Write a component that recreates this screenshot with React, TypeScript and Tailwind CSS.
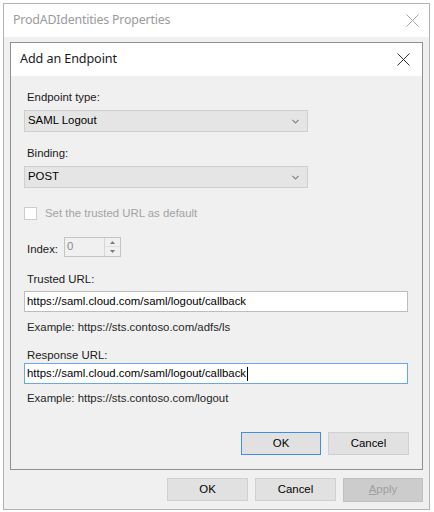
import React from 'react';

const uiFont = { fontFamily: '"Liberation Sans", Arial, sans-serif' };
const titleFont = { fontFamily: '"Noto Sans", "Open Sans", sans-serif' };

const CloseIcon = ({ color }: { color: string }) => (
    <svg width="13" height="13" viewBox="0 0 13 13" fill="none">
        <path d="M0.5 0.5 12.5 12.5 M12.5 0.5 0.5 12.5" stroke={color} strokeWidth="1" />
    </svg>
);

const Chevron = () => (
    <svg width="7" height="5" viewBox="0 0 7 5" fill="none">
        <path d="M0.5 1 3.5 4 6.5 1" stroke="#8a8a8a" strokeWidth="1.2" />
    </svg>
);

const Select = ({ value }: { value: string }) => (
    <div className="flex h-[22px] w-[284px] items-center justify-between border border-[#cfcfcf] bg-[#e5e5e5] pl-[3px] pr-[8px] text-[11.4px] text-black">
        <span>{value}</span>
        <Chevron />
    </div>
);

const TextBox = ({ value, focused }: { value: string; focused?: boolean }) => (
    <div
        className={
            focused
                ? 'flex h-[21px] w-[384px] items-center border border-[#6aa7e6] bg-white pl-[2px] text-[11.4px] text-black'
                : 'flex h-[21px] w-[384px] items-center border border-[#bdbdbd] bg-white pl-[2px] text-[11.4px] text-black'
        }
    >
        <span>{value}</span>
        {focused && <span className="ml-[1px] h-[14px] w-[1px] bg-black" />}
    </div>
);

const Button = ({ label, primary, disabled }: { label: string; primary?: boolean; disabled?: boolean }) => {
    if (disabled) {
        return (
            <div className="flex h-[24px] w-[80px] items-center justify-center border border-[#bfbfbf] bg-[#cccccc] text-[11.4px] text-[#a0a0a0]">
                <span>
                    <span className="underline">A</span>pply
                </span>
            </div>
        );
    }
    return (
        <div
            className={
                primary
                    ? 'flex h-[23px] w-[80px] items-center justify-center border border-[#3f8fde] bg-[#e1e1e1] text-[11.4px] text-black'
                    : 'flex h-[23px] w-[81px] items-center justify-center border border-[#d0d0d0] bg-[#e1e1e1] text-[11.4px] text-black'
            }
        >
            {label}
        </div>
    );
};

const SpinBox = () => (
    <div className="flex h-[20px] w-[57px] border border-[#c4c4c4] bg-[#f0f0f0]">
        <div className="flex-1 pl-[2px] pt-[1px] text-[11.4px] leading-[14px] text-[#8a8a8a]">0</div>
        <div className="flex w-[16px] flex-col border-l border-[#d6d6d6]">
            <div className="flex h-[9px] items-center justify-center border-b border-[#e0e0e0]">
                <svg width="5" height="3" viewBox="0 0 5 3">
                    <path d="M0 3 2.5 0 5 3Z" fill="#7a7a7a" />
                </svg>
            </div>
            <div className="flex flex-1 items-center justify-center">
                <svg width="5" height="3" viewBox="0 0 5 3">
                    <path d="M0 0 2.5 3 5 0Z" fill="#7a7a7a" />
                </svg>
            </div>
        </div>
    </div>
);

const Label = ({ children, className = '' }: { children: React.ReactNode; className?: string }) => (
    <div className={'h-[14px] text-[11.4px] leading-[14px] text-[#1a1a1a] ' + className}>{children}</div>
);

export default function App() {
    return (
        <div className="h-[512px] w-[434px] bg-white pl-[3px] pt-[3px]" style={uiFont}>
            <div className="flex h-[507px] w-[427px] flex-col border border-[#b3b3b3] bg-[#f0f0f0]">
                {/* outer window title */}
                <div className="flex h-[33px] items-center justify-between bg-white pl-[9px] pr-[10px]">
                    <span className="text-[12.4px] tracking-[-0.2px] text-[#9b9b9b]" style={titleFont}>
                        ProdADIdentities Properties
                    </span>
                    <CloseIcon color="#a8a8a8" />
                </div>

                <div className="flex flex-col pl-[6px] pr-[6px] pt-[5px]">
                    {/* inner dialog */}
                    <div className="flex h-[428px] w-[413px] flex-col border border-[#8f8f8f] bg-[#f0f0f0]">
                        <div className="flex h-[33px] items-center justify-between bg-white pl-[9px] pr-[12px]">
                            <span className="text-[12.6px] tracking-[-0.1px] text-[#1a1a1a]" style={titleFont}>
                                Add an Endpoint
                            </span>
                            <CloseIcon color="#333333" />
                        </div>

                        <div className="flex flex-col pl-[13px] pt-[14px]">
                            <Label className="pl-[3px]">Endpoint type:</Label>
                            <div className="mt-[6px]">
                                <Select value="SAML Logout" />
                            </div>

                            <Label className="mt-[14px] pl-[3px]">Binding:</Label>
                            <div className="mt-[6px]">
                                <Select value="POST" />
                            </div>

                            <div className="mt-[19px] flex h-[13px] items-center gap-[8px]">
                                <div className="h-[13px] w-[13px] border border-[#cdcdcd] bg-white" />
                                <span className="text-[11.4px] text-[#a3a3a3]">Set the trusted URL as default</span>
                            </div>

                            <div className="mt-[17px] flex h-[20px] items-center gap-[6px]">
                                <span className="pl-[3px] pt-[5px] text-[11.4px] text-[#1a1a1a]">Index:</span>
                                <SpinBox />
                            </div>

                            <Label className="mt-[15px] pl-[3px]">Trusted URL:</Label>
                            <div className="mt-[5px]">
                                <TextBox value="https://saml.cloud.com/saml/logout/callback" />
                            </div>
                            <Label className="mt-[8px] pl-[3px] text-[#262626]">Example: https://sts.contoso.com/adfs/ls</Label>

                            <Label className="mt-[14px] pl-[3px]">Response URL:</Label>
                            <div className="mt-[1px]">
                                <TextBox value="https://saml.cloud.com/saml/logout/callback" focused />
                            </div>
                            <Label className="mt-[7px] pl-[3px] text-[#262626]">Example: https://sts.contoso.com/logout</Label>

                            <div className="mt-[27px] flex justify-end gap-[7px] pr-[13px]">
                                <Button label="OK" primary />
                                <Button label="Cancel" />
                            </div>
                        </div>
                    </div>

                    <div className="mt-[8px] flex justify-end gap-[7px]">
                        <Button label="OK" />
                        <Button label="Cancel" />
                        <Button label="Apply" disabled />
                    </div>
                </div>
            </div>
        </div>
    );
}
